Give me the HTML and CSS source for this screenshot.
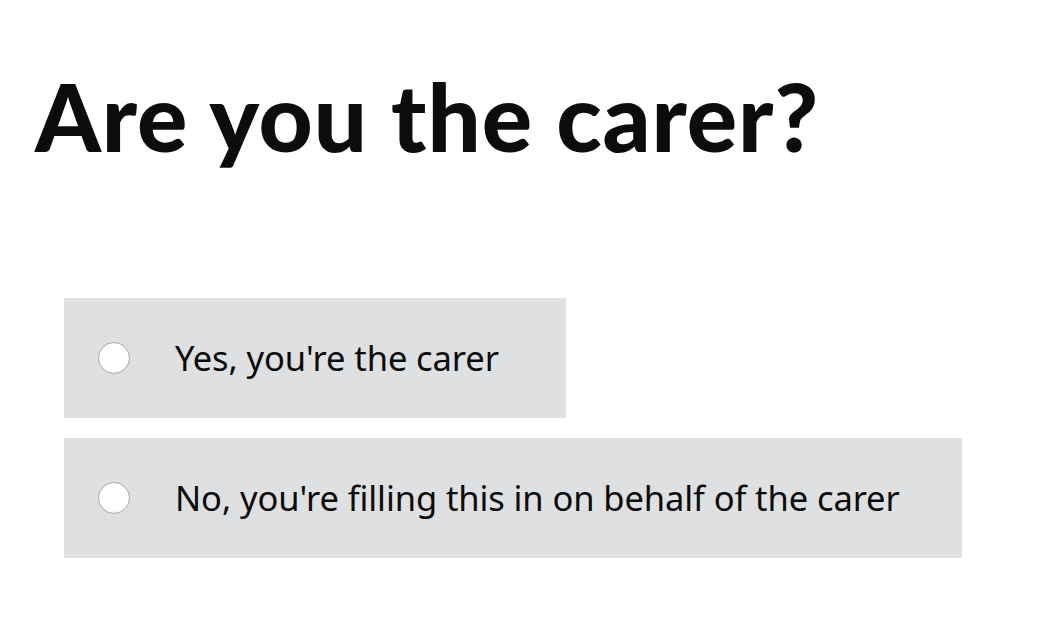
FILE: index.html
```html
<!DOCTYPE html>
<html lang="en">
<head>
<meta charset="utf-8">
<title>Are you the carer?</title>
<link rel="stylesheet" href="styles.css">
</head>
<body>
<main class="page">
  <h1 class="title">Are you the carer?</h1>
  <div class="options">
    <label class="option option-first">
      <span class="radio"></span>
      <span class="label-text">Yes, you're the carer</span>
    </label>
    <label class="option">
      <span class="radio"></span>
      <span class="label-text">No, you're filling this in on behalf of the carer</span>
    </label>
  </div>
</main>
</body>
</html>
```

FILE: styles.css
```css
html, body {
  margin: 0;
  padding: 0;
  background: #ffffff;
}

.page {
  padding: 0 0 0 35px;
  color: #0b0c0c;
}

.title {
  margin: 0;
  padding-top: 56px;
  font-family: "Lato", "Open Sans", sans-serif;
  font-weight: 900;
  font-size: 94px;
  line-height: 120px;
  letter-spacing: 0.9px;
  color: #0b0c0c;
}

.options {
  display: flex;
  flex-direction: column;
  align-items: flex-start;
  gap: 20px;
  margin-top: 122px;
  padding-left: 29px;
}

.option {
  display: flex;
  align-items: center;
  gap: 45px;
  height: 120px;
  box-sizing: border-box;
  padding: 0 62px 0 34px;
  background: #dee0e2;
}

.option-first {
  padding-right: 67px;
}

.radio {
  flex: none;
  width: 32px;
  height: 32px;
  box-sizing: border-box;
  border-radius: 50%;
  background: #ffffff;
  border: 1px solid #a9a9a9;
  box-shadow: inset 0 -1px 1px rgba(0,0,0,0.06);
}

.label-text {
  font-family: "Noto Sans", "Open Sans", sans-serif;
  font-size: 34.5px;
  line-height: 40px;
  letter-spacing: -0.1px;
  color: #0b0c0c;
}
```
